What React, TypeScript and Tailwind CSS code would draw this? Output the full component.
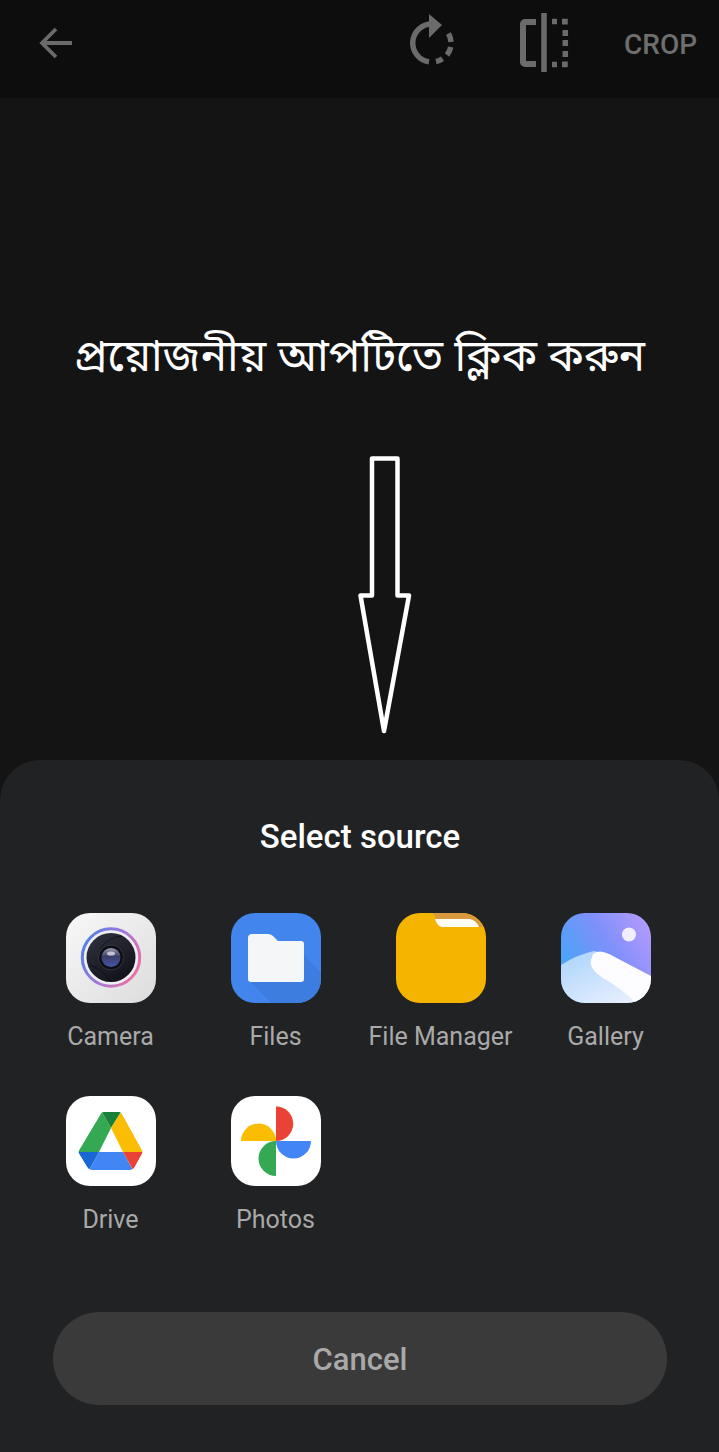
const sans = "font-['Roboto',sans-serif]"

function BackIcon() {
  return (
    <svg width="36" height="36" viewBox="0 0 36 36" fill="none" stroke="#6b6b6b" strokeWidth="3.8">
      <path d="M34 18H5M18 4 4 18l14 14" />
    </svg>
  )
}

function RotateIcon() {
  return (
    <svg width="48" height="54" viewBox="0 0 48 54" fill="none" stroke="#6b6b6b" strokeWidth="5.5">
      <path d="M24 12A19 19 0 0 0 21 49.800" />
      <path d="M28 49.500A19 19 0 0 0 34.500 46.800" />
      <path d="M39 43A19 19 0 0 0 42.700 35" />
      <path d="M43 30A19 19 0 0 0 40.500 21.500" />
      <path d="M21 2 34 13 21 26z" fill="#6b6b6b" stroke="none" />
    </svg>
  )
}

function FlipIcon() {
  return (
    <svg width="50" height="60" viewBox="0 0 50 60" fill="none" stroke="#6b6b6b" strokeWidth="5.500">
      <path d="M17 10H6a2 2 0 0 0-2 2V50a2 2 0 0 0 2 2H17" strokeWidth="6" />
      <path d="M25 1v59" />
      <path d="M33 9.500h5M43 9.500h3v3M46.300 18v6M46.300 28v6M46.300 39v6M33 52.500h5M43 52.500h3v-3" />
    </svg>
  )
}

function CameraIcon() {
  return (
    <svg width="90" height="90" viewBox="0 0 90 90">
      <defs>
        <linearGradient id="cam-ring" x1="0" y1="0.3" x2="1" y2="0.8">
          <stop offset="0" stopColor="#5480e4" />
          <stop offset="0.5" stopColor="#a877d8" />
          <stop offset="1" stopColor="#f26f9c" />
        </linearGradient>
        <linearGradient id="cam-bg" x1="0" y1="0" x2="1" y2="1">
          <stop offset="0" stopColor="#f8f8f8" />
          <stop offset="1" stopColor="#dcdcdc" />
        </linearGradient>
        <linearGradient id="cam-body" x1="0.2" y1="0" x2="0.8" y2="1">
          <stop offset="0" stopColor="#2e303c" />
          <stop offset="1" stopColor="#101117" />
        </linearGradient>
        <linearGradient id="cam-lens" x1="0" y1="0" x2="0" y2="1">
          <stop offset="0" stopColor="#9a9cab" />
          <stop offset="0.45" stopColor="#3a3f68" />
          <stop offset="1" stopColor="#4656a8" />
        </linearGradient>
      </defs>
      <rect width="90" height="90" rx="24" fill="url(#cam-bg)" />
      <circle cx="45" cy="44.500" r="28.700" fill="#eeeef2" stroke="url(#cam-ring)" strokeWidth="3" />
      <circle cx="45" cy="44.500" r="24.500" fill="url(#cam-body)" />
      <path d="M24 52Q36 56 44 68M56 23Q42 24 34 36" stroke="#0b0b10" strokeWidth="0.7" fill="none" />
      <circle cx="45" cy="44.500" r="12.500" fill="#0d0e14" stroke="#33343f" />
      <circle cx="45" cy="44.500" r="9.500" fill="url(#cam-lens)" />
      <ellipse cx="45" cy="40.500" rx="4" ry="2" fill="#c3c5d0" />
    </svg>
  )
}

function FilesIcon() {
  return (
    <svg width="90" height="90" viewBox="0 0 90 90">
      <rect width="90" height="90" rx="24" fill="#4285ec" />
      <path d="M73 42 90 60V66A24 24 0 0 1 66 90H40L20 69z" fill="#3e7de0" />
      <path d="M21 21h16q3 0 5 2l5 5h23a3 3 0 0 1 3 3v35a3 3 0 0 1-3 3H20a3 3 0 0 1-3-3V25a4 4 0 0 1 4-4z" fill="#f5f6f8" />
    </svg>
  )
}

function FileManagerIcon() {
  return (
    <svg width="90" height="90" viewBox="0 0 90 90">
      <rect width="90" height="90" rx="24" fill="#f5b400" />
      <path d="M36 0H66A24 24 0 0 1 87 14H50Q42 14 40 6Q39 2 36 0z" fill="#d99a3e" />
      <path d="M39 6H74Q80 7 83 14H46Q41 13 39 6z" fill="#fffdf4" />
    </svg>
  )
}

function GalleryIcon() {
  return (
    <svg width="90" height="90" viewBox="0 0 90 90">
      <defs>
        <linearGradient id="gal-sky" x1="0" y1="0.6" x2="1" y2="0">
          <stop offset="0" stopColor="#45a5f7" />
          <stop offset="0.5" stopColor="#7f90fb" />
          <stop offset="1" stopColor="#bc9bfd" />
        </linearGradient>
        <linearGradient id="gal-hill" x1="0" y1="0" x2="0.8" y2="1">
          <stop offset="0" stopColor="#a9d3fb" />
          <stop offset="1" stopColor="#eaf0ff" />
        </linearGradient>
        <clipPath id="gal-clip">
          <rect width="90" height="90" rx="24" />
        </clipPath>
      </defs>
      <g clipPath="url(#gal-clip)">
        <rect width="90" height="90" fill="url(#gal-sky)" />
        <circle cx="68" cy="21.500" r="7" fill="#f3eeff" />
        <path d="M0 52Q15 42 33 38L50 42 90 90H0z" fill="url(#gal-hill)" />
        <path d="M32 41Q38 36 48 41L90 63V88L75 90Q60 75 42 65Q28 56 30 47z" fill="#fdfdff" />
      </g>
    </svg>
  )
}

function DriveIcon() {
  return (
    <svg width="90" height="90" viewBox="0 0 90 90">
      <defs>
        <clipPath id="drive-clip">
          <path d="M38 16H53Q55 16 56 18L76 54Q77 56 76 58L69 71Q67 74 64 74H26Q23 74 21 71L13 58Q12 56 13 54L34 18Q35 16 38 16z" />
        </clipPath>
      </defs>
      <rect width="90" height="90" rx="24" fill="#fff" />
      <g clipPath="url(#drive-clip)">
        <path d="M36 16 12 56h21l12-24z" fill="#34a853" />
        <path d="M36 16h19L45 32z" fill="#188038" />
        <path d="M55 16 77 56H57L45 32z" fill="#fbbc04" />
        <path d="M33 56H57L67 74H23z" fill="#4285f4" />
        <path d="M12 56H33L23 74z" fill="#1967d2" />
        <path d="M57 56H77L67 74z" fill="#ea4335" />
      </g>
    </svg>
  )
}

function PhotosIcon() {
  return (
    <svg width="90" height="90" viewBox="0 0 90 90">
      <rect width="90" height="90" rx="24" fill="#fff" />
      <path d="M45 10.500A17.250 17.250 0 0 1 45 45z" fill="#ea4335" />
      <path d="M80 45A17.500 17.500 0 0 1 45 45z" fill="#4285f4" />
      <path d="M45 80A17.500 17.500 0 0 1 45 45z" fill="#34a853" />
      <path d="M10 45A17.500 17.500 0 0 1 45 45z" fill="#fbbc04" />
    </svg>
  )
}

const apps = [
  { name: 'Camera', icon: <CameraIcon /> },
  { name: 'Files', icon: <FilesIcon /> },
  { name: 'File Manager', icon: <FileManagerIcon /> },
  { name: 'Gallery', icon: <GalleryIcon /> },
  { name: 'Drive', icon: <DriveIcon /> },
  { name: 'Photos', icon: <PhotosIcon /> },
]

export default function App() {
  return (
    <div className={`flex h-[1452px] w-[719px] flex-col overflow-hidden bg-[#141414] ${sans}`}>
      <div className="flex h-[98px] shrink-0 items-start bg-[#0d0d0d] pl-[38px]">
        <div className="mt-[25px]">
          <BackIcon />
        </div>
        <div className="ml-[334px] mt-[12px]">
          <RotateIcon />
        </div>
        <div className="ml-[63px] mt-[12px]">
          <FlipIcon />
        </div>
        <span className="ml-[55px] mt-[29px] text-[28px] font-medium leading-[32px] text-[#6e6e6e]">CROP</span>
      </div>

      <div className="flex flex-1 flex-col">
        <h1 className="mt-[234px] text-center font-['Noto_Sans_Bengali','Noto_Sans','Lohit_Bengali',sans-serif] text-[44px] leading-[56px] text-white">
          প্রয়োজনীয় আপটিতে ক্লিক করুন
        </h1>
        <svg className="ml-[355px] mt-[62px]" width="60" height="290" viewBox="0 0 60 290" fill="none" stroke="#fff" strokeWidth="4.5" strokeLinejoin="round">
          <path d="M17 8.500H42.500V145.500H54L29 281 5.500 145.500H17z" />
        </svg>
      </div>

      <div className="flex h-[692px] shrink-0 flex-col rounded-t-[40px] bg-[#212224] px-[28px]">
        <h2 className="ml-px mt-[58px] text-center text-[33px] font-medium leading-[37px] text-white">Select source</h2>
        <div className="mt-[58px] grid grid-cols-[repeat(4,165px)] gap-y-[45px]">
          {apps.map((app) => (
            <div key={app.name} className="flex flex-col items-center">
              {app.icon}
              <span className="mt-[20px] whitespace-nowrap text-[25px] leading-[28px] text-[#a9a9a9]">{app.name}</span>
            </div>
          ))}
        </div>
        <button className="ml-[25px] mr-[24px] mt-[78px] h-[93px] rounded-full bg-[#3a3a3a] pt-[3px] text-[31px] font-medium text-[#a9a9a9]">
          Cancel
        </button>
      </div>
    </div>
  )
}
